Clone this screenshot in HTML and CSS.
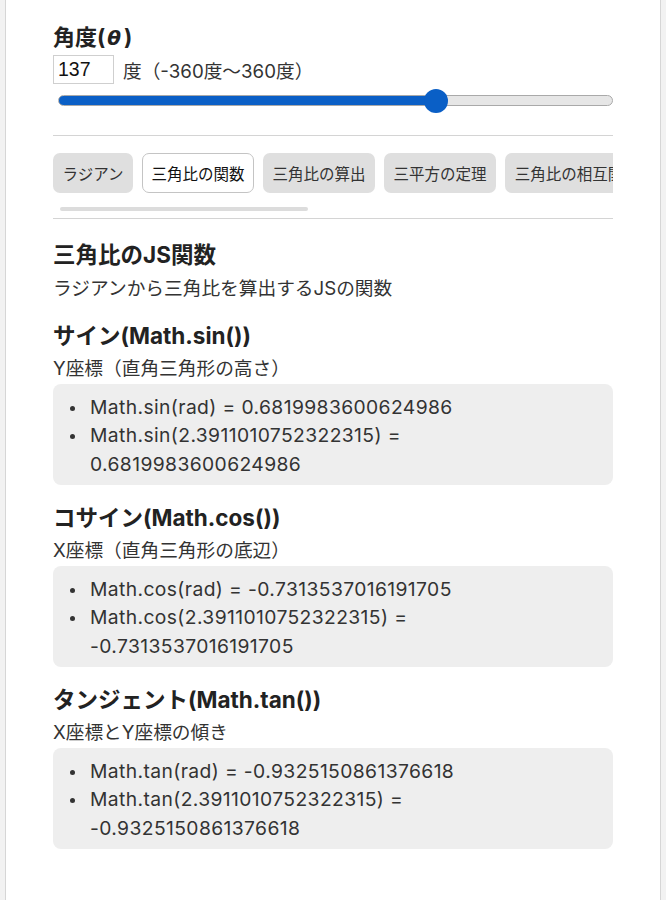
FILE: index.html
```html
<!DOCTYPE html>
<html lang="ja">
<head>
    <meta charset="UTF-8">
    <meta name="viewport" content="width=device-width, initial-scale=1.0">
    <title>三角比のJS関数</title>
    <link rel="stylesheet" href="styles.css">
</head>
<body>
    <div class="page">
        <div class="angle">
            <h2 class="angle-title">角度(<i>θ</i>)</h2>
            <div class="angle-row">
                <input class="angle-input" type="text" value="137">
                <span class="angle-unit">度（-360度〜360度）</span>
            </div>
            <input class="angle-range" type="range" min="-360" max="360" value="137" style="--fill: 68.3%;">
        </div>
        <hr class="divider">
        <div class="tabs">
            <button class="tab">ラジアン</button>
            <button class="tab active">三角比の関数</button>
            <button class="tab">三角比の算出</button>
            <button class="tab">三平方の定理</button>
            <button class="tab">三角比の相互関係</button>
            <button class="tab">正弦定理</button>
            <button class="tab">余弦定理</button>
            <button class="tab">加法定理</button>
            <button class="tab">倍角の公式</button>
            <button class="tab">三角形の面積</button>
        </div>
        <div class="tabs-scroll"><div class="tabs-scroll-thumb"></div></div>
        <hr class="divider divider-tabs">
        <div class="panel">
            <h2 class="panel-title">三角比のJS関数</h2>
            <p class="desc">ラジアンから三角比を算出するJSの関数</p>

            <h3 class="func-title">サイン(Math.sin())</h3>
            <p class="desc">Y座標（直角三角形の高さ）</p>
            <ul class="result">
                <li>Math.sin(rad) = 0.6819983600624986</li>
                <li>Math.sin(2.3911010752322315) = 0.6819983600624986</li>
            </ul>

            <h3 class="func-title">コサイン(Math.cos())</h3>
            <p class="desc">X座標（直角三角形の底辺）</p>
            <ul class="result">
                <li>Math.cos(rad) = -0.7313537016191705</li>
                <li>Math.cos(2.3911010752322315) = -0.7313537016191705</li>
            </ul>

            <h3 class="func-title">タンジェント(Math.tan())</h3>
            <p class="desc">X座標とY座標の傾き</p>
            <ul class="result">
                <li>Math.tan(rad) = -0.9325150861376618</li>
                <li>Math.tan(2.3911010752322315) = -0.9325150861376618</li>
            </ul>
        </div>
    </div>
</body>
</html>
```

FILE: styles.css
```css
body {
    margin: 0;
    background-color: #f2f2f2;
    color: #333;
    font-family: Inter, "Noto Sans CJK JP", sans-serif;
    font-size: 18.7px;
}
.page {
    box-sizing: border-box;
    width: 656px;
    min-height: 100vh;
    margin-left: 5px;
    padding: 23px 47px 40px;
    background-color: #fff;
    border-left: 1px solid #d6d6d6;
    border-right: 1px solid #d6d6d6;
}
.angle-title {
    margin: 0;
    font-size: 22px;
    line-height: 28px;
    color: #222;
}
.angle-title i {
    padding: 0 3px 0 2px;
    font-family: "DejaVu Sans", sans-serif;
    font-size: 20px;
}
.angle-row {
    display: flex;
    align-items: center;
    gap: 9px;
    margin-top: 3px;
}
.angle-input {
    box-sizing: border-box;
    width: 61px;
    height: 29px;
    padding: 0 4px;
    border: 1px solid #cfcfcf;
    font-family: "Liberation Sans", sans-serif;
    font-size: 19.5px;
    color: #111;
}
.angle-range {
    -webkit-appearance: none;
    appearance: none;
    display: block;
    width: calc(100% - 5px);
    height: 24px;
    margin: 4px 0 0 5px;
    background: transparent;
}
.angle-range::-webkit-slider-runnable-track {
    height: 11px;
    border: 1px solid #a9a9a9;
    border-radius: 7px;
    background: linear-gradient(to right, #0a5fc6 var(--fill), #e6e6e6 var(--fill));
}
.angle-range::-webkit-slider-thumb {
    -webkit-appearance: none;
    width: 24px;
    height: 24px;
    margin-top: -7px;
    border: none;
    border-radius: 50%;
    background-color: #0a5fc6;
}
.divider {
    margin: 23px 0 0;
    border: none;
    border-top: 1px solid #d4d4d4;
}
.divider-tabs {
    margin-top: 7px;
}
.tabs {
    display: flex;
    gap: 9px;
    margin-top: 17px;
    overflow-x: auto;
    scrollbar-width: none;
}
.tab {
    flex: none;
    height: 40px;
    padding: 0 8.5px;
    border: 1px solid transparent;
    border-radius: 7px;
    background-color: #dfdfdf;
    color: #333;
    font-family: inherit;
    font-size: 15.5px;
    cursor: pointer;
}
.tab.active {
    background-color: #fff;
    border-color: #c4c4c4;
    color: #111;
}
.tabs-scroll {
    height: 4px;
    margin-top: 14px;
    padding-left: 7px;
}
.tabs-scroll-thumb {
    width: 248px;
    height: 4px;
    border-radius: 2px;
    background-color: #dcdcdc;
}
.panel-title {
    margin: 22px 0 0;
    font-size: 22.5px;
    line-height: 28px;
    color: #222;
}
.desc {
    margin: 7px 0 0;
    line-height: 24px;
}
.panel-title + .desc {
    margin-top: 8px;
}
.func-title {
    margin: 19px 0 0;
    font-size: 22.5px;
    line-height: 28px;
    color: #222;
}
.panel-title + .desc + .func-title {
    margin-top: 21px;
}
.result {
    margin: 3px 0 0;
    padding: 8.5px 16px 7px 37px;
    background-color: #eeeeee;
    border-radius: 8px;
    font-size: 19.3px;
    letter-spacing: 0.02em;
    line-height: 28.5px;
    list-style: none;
}
.result li::before {
    content: "";
    display: inline-block;
    width: 5px;
    height: 5px;
    margin-left: -20px;
    margin-right: 15px;
    border-radius: 50%;
    background-color: #333;
    vertical-align: middle;
}
```
